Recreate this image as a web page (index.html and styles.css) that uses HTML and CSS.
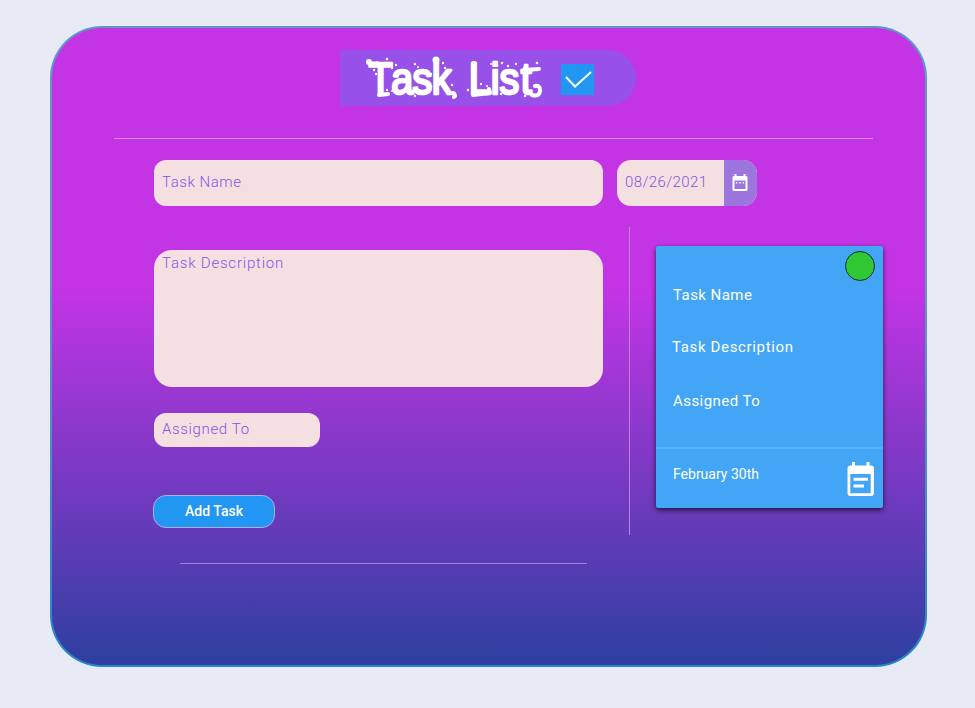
FILE: index.html
```html
<!DOCTYPE html>
<html lang="en">
<head>
<meta charset="utf-8">
<title>Task List</title>
<link rel="stylesheet" href="styles.css">
</head>
<body>
<main class="panel">
  <header class="title">
    <h1 class="title-heading">
      <svg class="title-art" width="180" height="56" viewBox="0 -3 180 56">
        <g class="title-text" transform="scale(.88 1)">
          <text x="5 31 55 77" y="41">Task</text>
          <text x="119 144 154 178" y="41">List</text>
        </g>
        <g fill="none" stroke="#fff" stroke-width="4" stroke-linecap="round" stroke-linejoin="round">
          <path d="M5 9q3 3 8 1M15 42l9-1M89 40q3 1 1 4M109 42l17-2-1-4M168 42q8 2 8-5 0-5-5-4M160 17l15-1"/>
        </g>
        <g fill="#fff">
          <circle cx="5" cy="9" r="3"/><circle cx="23" cy="6" r="1.3"/><circle cx="10" cy="17" r="1.2"/>
          <circle cx="12" cy="21" r="1.2"/><circle cx="23" cy="37" r="1.2"/><circle cx="28" cy="38" r="1"/>
          <circle cx="28" cy="15" r="1.2"/><circle cx="32" cy="12" r="1.2"/><circle cx="47" cy="38" r="1.2"/>
          <circle cx="51" cy="11" r="1.2"/><circle cx="54" cy="14" r="1"/><circle cx="51" cy="43" r="1.2"/>
          <circle cx="67" cy="21" r="1.2"/><circle cx="72" cy="7" r="3.5"/><circle cx="79" cy="10" r="1.2"/>
          <circle cx="81" cy="15" r="1.2"/><circle cx="88" cy="32" r="1.2"/><circle cx="91" cy="43" r="2"/>
          <circle cx="104" cy="37" r="1.2"/><circle cx="110" cy="11" r="3"/><circle cx="117" cy="31" r="1.2"/>
          <circle cx="123" cy="33" r="1"/><circle cx="127" cy="11" r="1"/><circle cx="138" cy="10" r="1.2"/>
          <circle cx="144" cy="13" r="1.2"/><circle cx="137" cy="41" r="1.2"/><circle cx="152" cy="11" r="1.2"/>
          <circle cx="153" cy="34" r="1.2"/><circle cx="161" cy="43" r="1.2"/><circle cx="173" cy="10" r="1.3"/>
        </g>
      </svg>
    </h1>
    <svg class="check" width="33" height="31" viewBox="0 0 33 31"><rect width="33" height="31" fill="#2196f3"/><path d="M5 13l9 9.500L30 8" fill="none" stroke="#fff" stroke-width="2"/></svg>
  </header>
  <div class="rule rule-top"></div>

  <div class="row">
    <div class="field name">Task Name</div>
    <div class="field date">
      <span class="date-value">08/26/2021</span>
      <span class="date-button">
        <svg width="16" height="18" viewBox="0 0 16 18"><path fill="#fff" fill-rule="evenodd" d="M2.500 0h2v2h7V0h2v2H14a1.500 1.500 0 0 1 1.500 1.500v12A1.500 1.500 0 0 1 14 17H2a1.500 1.500 0 0 1-1.500-1.500v-12A1.500 1.500 0 0 1 2 2h.5zM2.500 6.500v8.500h11V6.500z"/><path d="M3.800 8.700h1.500M7.200 8.700h1.500M10.600 8.700h1.500" stroke="#fff" stroke-width="1.500"/></svg>
      </span>
    </div>
  </div>

  <div class="content">
    <section class="form">
      <div class="field description">Task Description</div>
      <div class="field assigned">Assigned To</div>
      <button class="add" type="button">Add Task</button>
      <div class="rule rule-bottom"></div>
    </section>
    <div class="divider"></div>
    <article class="card">
      <span class="status"></span>
      <div class="card-body">
        <p class="card-line card-name">Task Name</p>
        <p class="card-line card-desc">Task Description</p>
        <p class="card-line card-to">Assigned To</p>
      </div>
      <footer class="card-footer">
        <span>February 30th</span>
        <svg class="note" width="27" height="35" viewBox="0 0 27 35"><path fill="#fff" fill-rule="evenodd" d="M5 0h3v3.500h11.500V0h3v3.500h1.500a3 3 0 0 1 3 3V31a3 3 0 0 1-3 3H3.500a3 3 0 0 1-3-3V6.500a3 3 0 0 1 3-3H5zM3.300 12v19.200h20.400V12z"/><path d="M6.500 17.200H21M6.500 24H17" stroke="#fff" stroke-width="3"/></svg>
      </footer>
    </article>
  </div>
</main>
</body>
</html>
```

FILE: styles.css
```css
* { box-sizing: border-box; }

body {
  margin: 0;
  height: 708px;
  padding: 26px 48px 0 50px;
  background: #e8eaf6;
  font-family: Roboto, "Liberation Sans", sans-serif;
  overflow: hidden;
}

.panel {
  height: 641px;
  border: 2px solid transparent;
  border-radius: 52px;
  padding-top: 22px;
  background:
    linear-gradient(#c334e5 0, #c334e5 41%, #2d3f9f 100%) padding-box,
    linear-gradient(#5c98c8, #5c98c8 41%, #2487cb) border-box;
}

.title {
  display: flex;
  align-items: center;
  width: 296px;
  height: 56px;
  margin-left: 288px;
  padding-left: 24px;
  border-radius: 0 28px 28px 0;
  background: #9851e8;
}

.title-heading { margin: 0; height: 56px; line-height: 0; }
.title-art { overflow: visible; }

.title-text {
  font: 45px "Liberation Sans", sans-serif;
  fill: #fff;
  stroke: #fff;
  stroke-width: 2.6px;
  stroke-linejoin: round;
}

.check { margin: 2px 0 0 17px; }

.rule { height: 1px; background: #db85ef; }
.rule-top { width: 759px; margin: 32px 0 21px 62px; }

.row { display: flex; gap: 14px; margin-left: 102px; }

.field {
  background: #f4e0e1;
  color: #8456e2;
  font-size: 15px;
  font-weight: 300;
  letter-spacing: 0.65px;
}

.name { width: 449px; height: 46px; padding-left: 8px; border-radius: 12px; line-height: 44px; letter-spacing: 0.55px; }

.date { display: flex; width: 140px; height: 46px; border-radius: 14px; overflow: hidden; }
.date-value { width: 107px; padding-left: 8px; line-height: 44px; letter-spacing: 0.4px; }
.date-button { display: flex; flex: 1; padding: 14px 0 0 8px; background: #9c75df; }

.content { display: flex; margin: 21px 0 0 102px; }

.form { width: 449px; padding-top: 23px; }
.description { height: 137px; padding-left: 8px; border-radius: 18px; line-height: 26px; letter-spacing: 0.8px; }
.assigned { width: 166px; height: 34px; margin-top: 26px; padding-left: 8px; border-radius: 12px; line-height: 32px; }

.add {
  display: block;
  width: 122px;
  height: 33px;
  margin: 48px 0 0 -1px;
  padding: 0 0 1px;
  border: 1px solid #a9b4ee;
  border-radius: 13px;
  background: #2196f3;
  color: #fff;
  font: 500 14px Roboto, sans-serif;
}

.rule-bottom { width: 407px; margin: 35px 0 0 26px; background: #9b84de; }

.divider { width: 1px; height: 308px; margin-left: 26px; background: #c77de4; }

.card {
  position: relative;
  width: 227px;
  height: 262px;
  margin: 19px 0 0 26px;
  border-radius: 2px;
  background: #42a5f5;
  color: #fff;
  box-shadow: 0 2px 5px rgba(0, 0, 0, 0.7);
}

.status {
  position: absolute;
  top: 5px;
  right: 8px;
  width: 30px;
  height: 30px;
  border: 1px solid #102c30;
  border-radius: 50%;
  background: #30c735;
}

.card-body { height: 201px; padding: 39px 0 0 17px; }
.card-line { margin: 0; font-size: 15px; line-height: 20px; letter-spacing: 0.45px; }
.card-desc { margin: 32px 0 34px -1px; letter-spacing: 0.65px; }

.card-footer {
  display: flex;
  justify-content: space-between;
  height: 61px;
  padding: 13px 9px 0 17px;
  border-top: 2px solid #55aff7;
  font-size: 14px;
  line-height: 24px;
}
```
